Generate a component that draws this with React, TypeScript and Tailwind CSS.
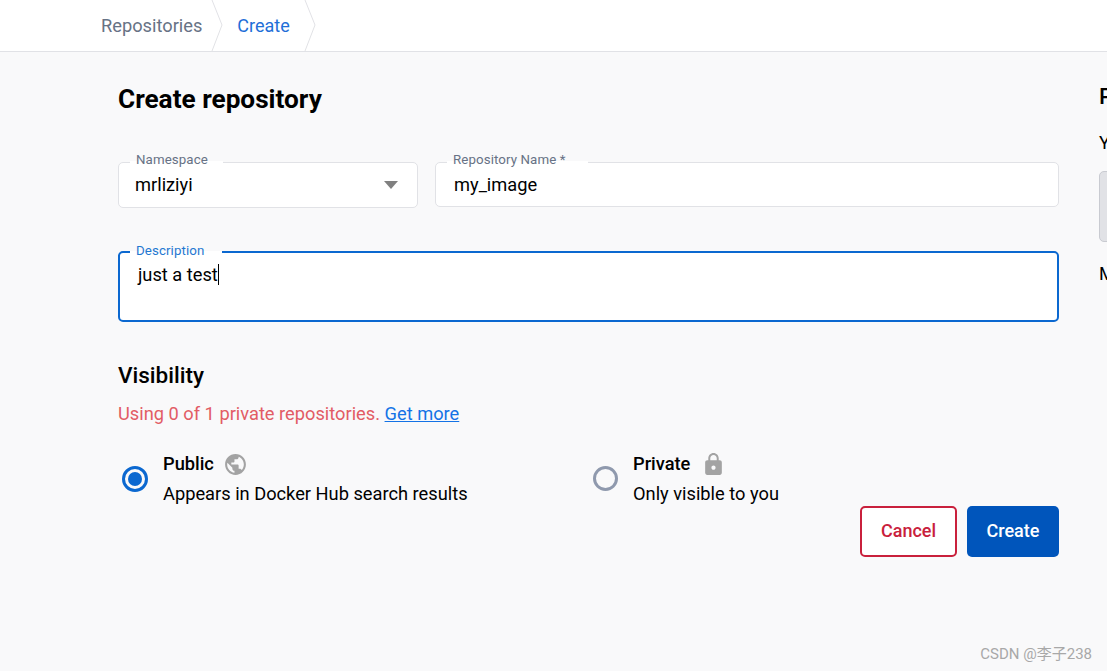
import React from "react";

const font = { fontFamily: "Roboto, sans-serif" };

const Chevron = () => (
    <svg width="12" height="51" viewBox="0 0 12 51" className="shrink-0" fill="none">
        <path d="M1 0 L11 25 L1 51" stroke="#e1e2e6" strokeWidth="1" />
    </svg>
);

const FloatLabel: React.FC<{ text: string; className: string; active?: boolean }> = ({
    text,
    className,
    active,
}) => (
    <div
        className={`absolute h-[16px] text-[13.3px] leading-[16px] tracking-[0.1px] pl-[6px] whitespace-nowrap ${className} ${
            active
                ? "-top-[10px] bg-[linear-gradient(to_bottom,#f9f9fa_8px,#ffffff_8px)] text-[#1f78d1]"
                : "-top-[11px] bg-[linear-gradient(to_bottom,#f9f9fa_9px,#ffffff_9px)] text-[#677285]"
        }`}
    >
        {text}
    </div>
);

const GlobeIcon = () => (
    <svg width="25" height="25" viewBox="0 0 24 24" fill="#a3a3a3">
        <path d="M12 2C6.48 2 2 6.48 2 12s4.48 10 10 10 10-4.48 10-10S17.52 2 12 2zm-1 17.93c-3.95-.49-7-3.85-7-7.93 0-.62.08-1.21.21-1.79L9 15v1c0 1.1.9 2 2 2v1.93zm6.9-2.54c-.26-.81-1-1.39-1.9-1.39h-1v-3c0-.55-.45-1-1-1H8v-2h2c.55 0 1-.45 1-1V7h2c1.1 0 2-.9 2-2v-.41c2.93 1.19 5 4.06 5 7.41 0 2.08-.8 3.97-2.1 5.39z" />
    </svg>
);

const LockIcon = () => (
    <svg width="25" height="25" viewBox="0 0 24 24" fill="#a3a3a3">
        <path d="M18 8h-1V6c0-2.76-2.24-5-5-5S7 3.24 7 6v2H6c-1.1 0-2 .9-2 2v10c0 1.1.9 2 2 2h12c1.1 0 2-.9 2-2V10c0-1.1-.9-2-2-2zm-6 9c-1.1 0-2-.9-2-2s.9-2 2-2 2 .9 2 2-.9 2-2 2zm3.1-9H8.9V6c0-1.71 1.39-3.1 3.1-3.1s3.1 1.39 3.1 3.1v2z" />
    </svg>
);

export default function App() {
    return (
        <div className="relative w-[1107px] h-[671px] overflow-hidden bg-[#f9f9fa] text-black" style={font}>
            <nav className="h-[52px] bg-white border-b border-[#e1e2e6] flex items-center pl-[101px] text-[18.25px]">
                <span className="text-[#677285]">Repositories</span>
                <span className="ml-[9px] mr-[14px] flex">
                    <Chevron />
                </span>
                <span className="text-[18px] text-[#1f6fd8]">Create</span>
                <span className="ml-[14px] flex">
                    <Chevron />
                </span>
            </nav>

            <div className="flex pl-[118px] gap-[40px]">
                <main className="w-[941px] shrink-0">
                    <h1 className="mt-[30px] text-[26.2px] leading-[34px] font-bold">Create repository</h1>

                    <div className="mt-[46px] flex gap-[17px] text-[18.25px]">
                        <div className="relative w-[300px] h-[46px] shrink-0 bg-white border border-[#e1e2e6] rounded-[5px] flex items-center justify-between pl-[16px] pr-[19px]">
                            <FloatLabel text="Namespace" className="left-[11px] w-[93px]" />
                            <span>mrliziyi</span>
                            <svg width="14" height="8" viewBox="0 0 14 8" fill="#808080">
                                <path d="M0 0 H14 L7 8 Z" />
                            </svg>
                        </div>
                        <div className="relative flex-1 h-[45px] bg-white border border-[#e1e2e6] rounded-[5px] flex items-center pl-[18px]">
                            <FloatLabel text="Repository Name *" className="left-[11px] w-[141px]" />
                            <span>my_image</span>
                        </div>
                    </div>

                    <div className="relative mt-[43px] h-[71px] bg-white border-2 border-[#0b68d0] rounded-[5px] pl-[18px] pt-[9px] text-[18.25px] leading-[26px]">
                        <FloatLabel text="Description" active className="left-[10px] w-[92px]" />
                        <span className="border-r border-black">just a test</span>
                    </div>

                    <h2 className="mt-[38px] text-[22.5px] leading-[30px] font-medium">Visibility</h2>
                    <p className="mt-[12px] text-[18.25px] leading-[24px] text-[#e25c65]">
                        Using 0 of 1 private repositories.{" "}
                        <a className="text-[#1473e6] underline">Get more</a>
                    </p>

                    <div className="mt-[25px] flex items-start text-[18.25px]">
                        <div className="w-[471px] shrink-0 flex items-center gap-[15px] pl-[4px]">
                            <div className="w-[26px] h-[26px] rounded-full border-[3px] border-[#0b68d0] flex items-center justify-center">
                                <div className="w-[14px] h-[14px] rounded-full bg-[#0b68d0]" />
                            </div>
                            <div>
                                <div className="flex items-center gap-[9px] h-[26px]">
                                    <span className="font-medium">Public</span>
                                    <GlobeIcon />
                                </div>
                                <div className="mt-[5px] leading-[24px]">Appears in Docker Hub search results</div>
                            </div>
                        </div>
                        <div className="flex items-center gap-[15px] pl-[4px]">
                            <div className="w-[25px] h-[25px] rounded-full border-[3px] border-[#8f99ad]" />
                            <div>
                                <div className="flex items-center gap-[11px] h-[26px]">
                                    <span className="font-medium">Private</span>
                                    <LockIcon />
                                </div>
                                <div className="mt-[5px] leading-[24px]">Only visible to you</div>
                            </div>
                        </div>
                    </div>

                    <div className="flex justify-end gap-[10px] text-[18px] font-medium">
                        <button className="w-[97px] h-[51px] bg-white border-2 border-[#c9203c] rounded-[5px] pb-[2px] text-[#c9203c]">
                            Cancel
                        </button>
                        <button className="w-[92px] h-[51px] bg-[#0055bb] rounded-[5px] pb-[2px] text-white">Create</button>
                    </div>
                </main>

                <aside className="w-[400px] shrink-0 text-[18.25px]">
                    <h3 className="mt-[29px] text-[22.5px] leading-[30px] font-medium">Pro tip</h3>
                    <p className="mt-[20px] leading-[24px]">You can push a new image</p>
                    <div className="mt-[16px] h-[71px] bg-[#e1e2e6] border border-[#c9cbd1] rounded-[5px]" />
                    <p className="mt-[20px] leading-[24px]">Make sure you have</p>
                </aside>
            </div>

            <div
                className="absolute right-[15px] top-[645px] text-[15px] leading-[18px] text-[#a8a8a8]"
                style={{ fontFamily: "Roboto, 'Noto Sans CJK SC', sans-serif" }}
            >
                CSDN @李子238
            </div>
        </div>
    );
}
